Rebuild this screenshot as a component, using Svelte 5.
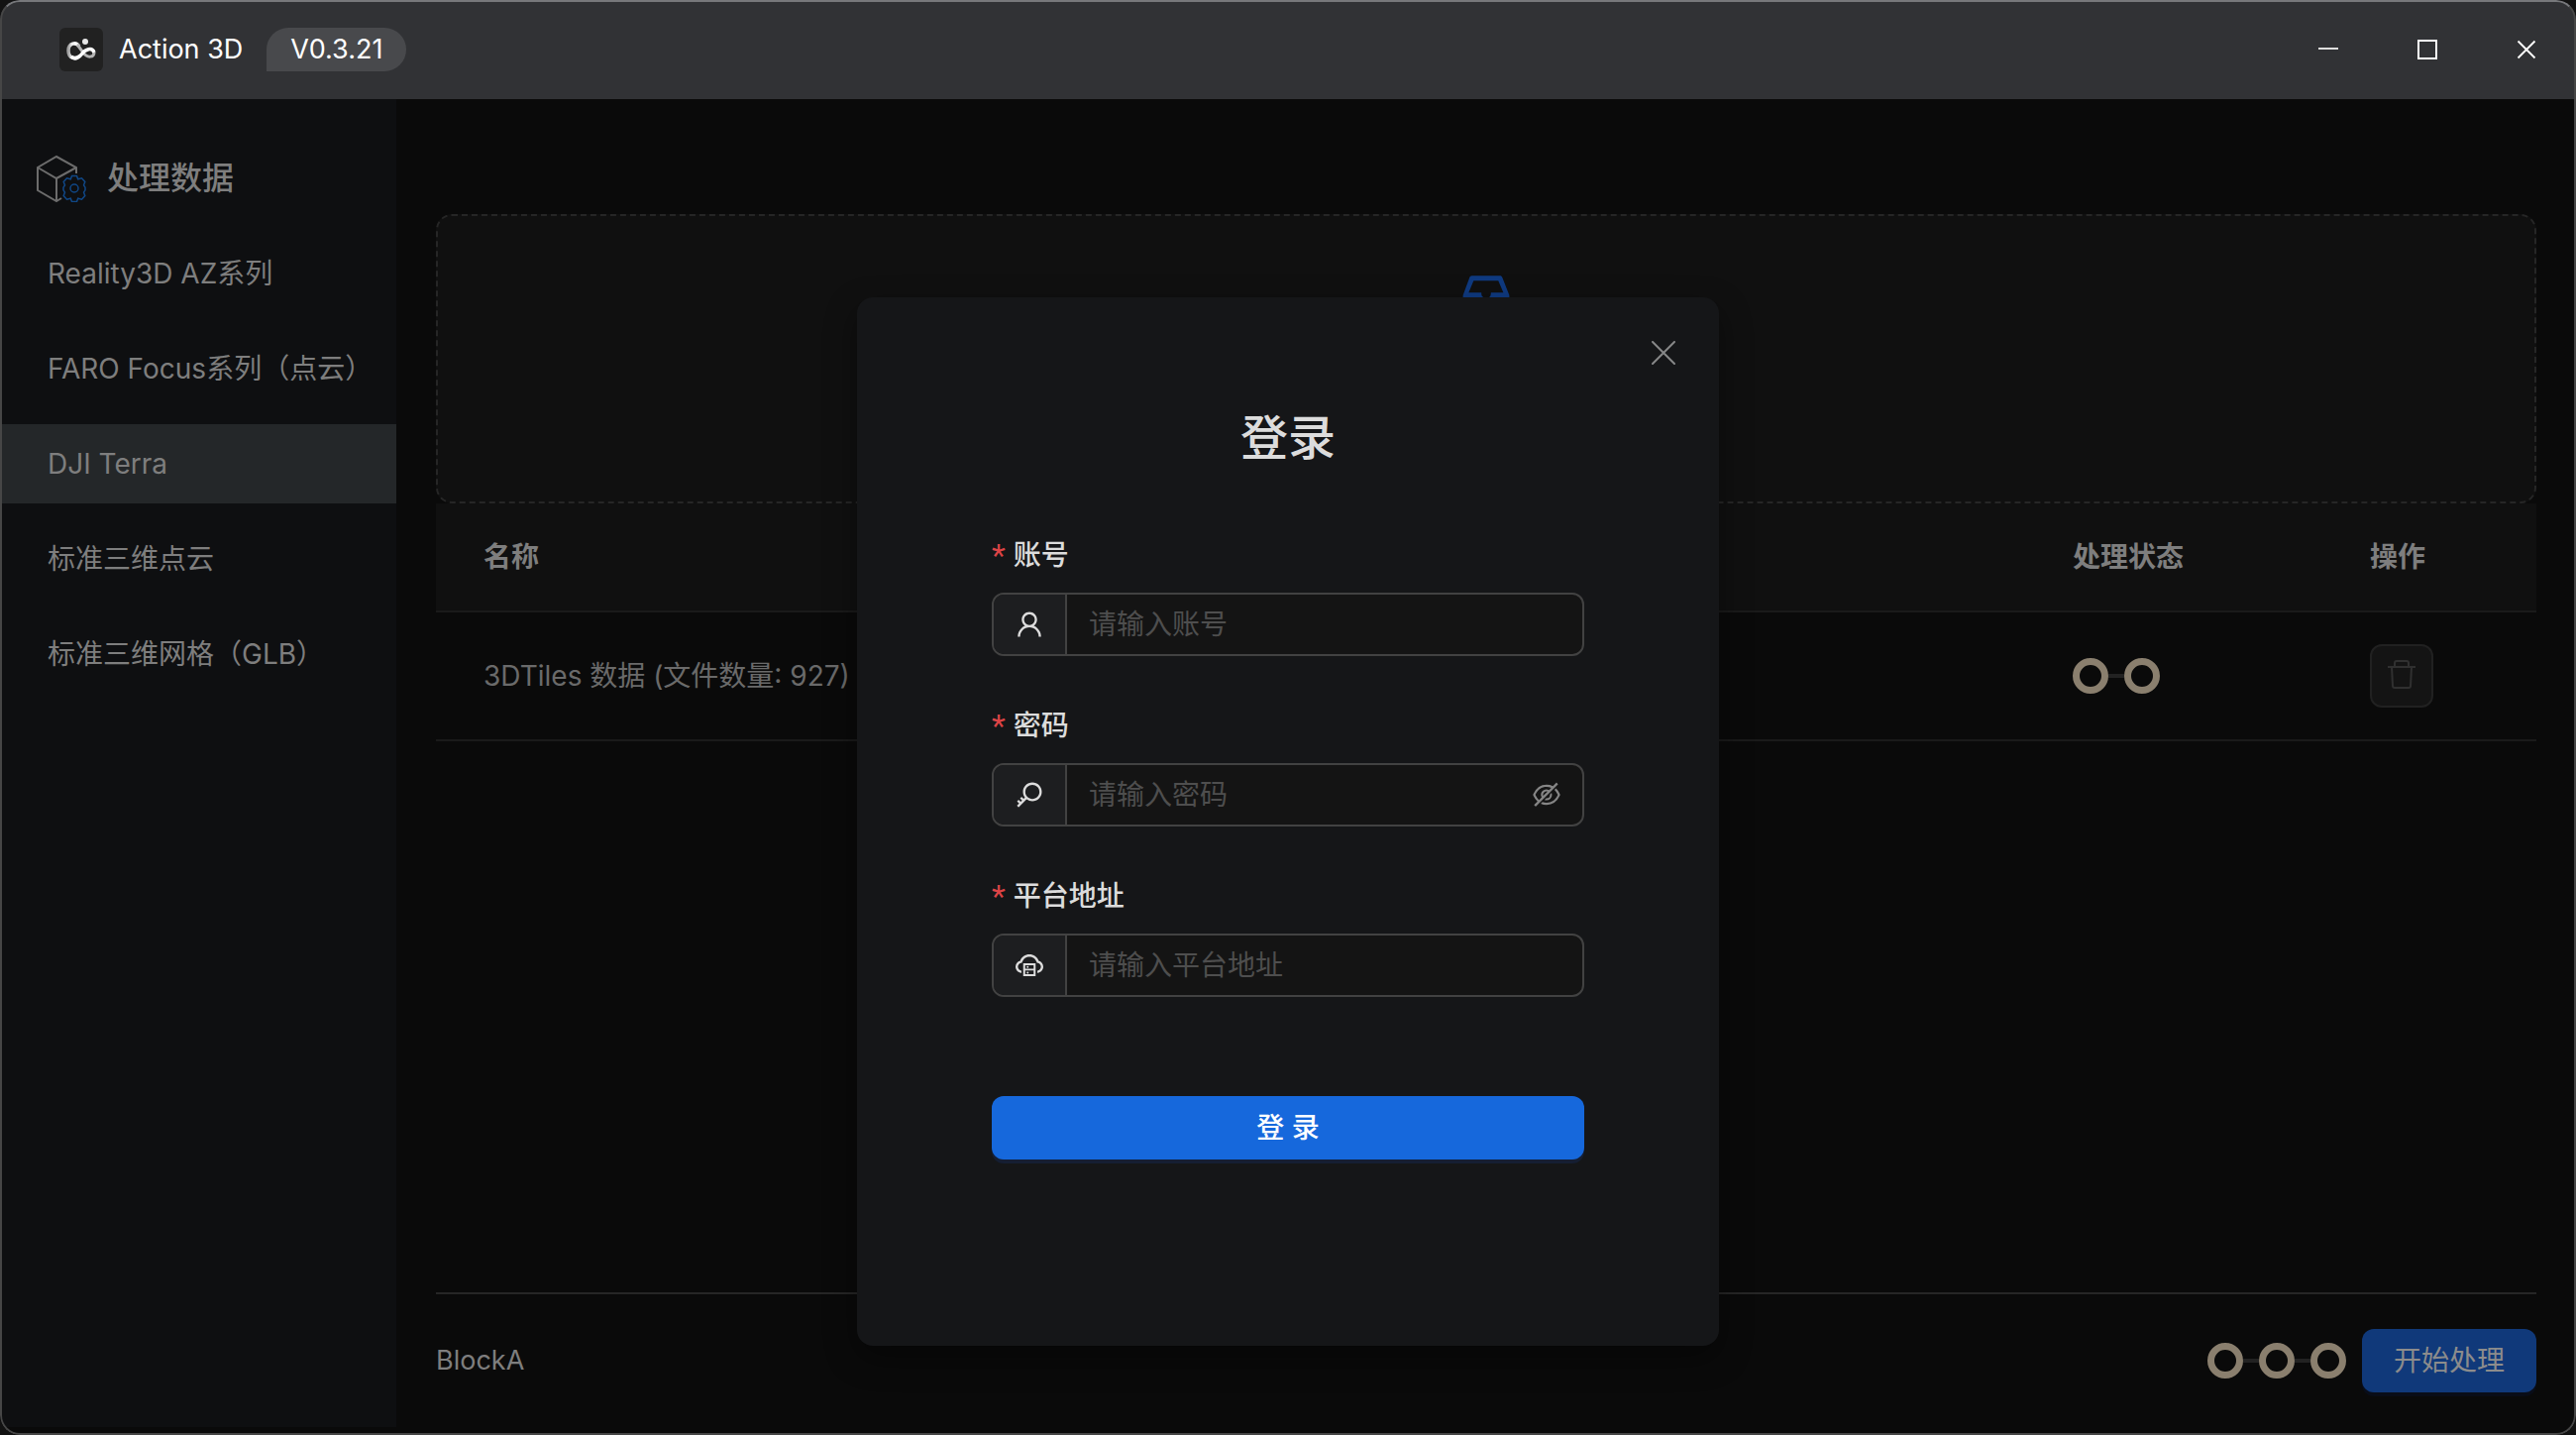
<script lang="ts">
    let account = $state("");
    let password = $state("");
    let address = $state("");
    let showPassword = $state(false);
    let active = $state("DJI Terra");

    const menu = [
        "Reality3D AZ系列",
        "FARO Focus系列（点云）",
        "DJI Terra",
        "标准三维点云",
        "标准三维网格（GLB）",
    ];

    const icons = {
        user: "M858.5 763.6a374 374 0 00-80.6-119.5 375.63 375.63 0 00-119.5-80.6c-.4-.2-.8-.3-1.2-.5C719.5 518 760 444.7 760 362c0-137-111-248-248-248S264 225 264 362c0 82.7 40.5 156 102.8 201.1-.4.2-.8.3-1.2.5-44.8 18.9-85 46-119.5 80.6a375.63 375.63 0 00-80.6 119.5A371.7 371.7 0 00136 901.8a8 8 0 008 8.2h60c4.4 0 7.9-3.5 8-7.8 2-77.2 33-149.5 87.8-204.3 56.7-56.7 132-87.9 212.2-87.9s155.5 31.2 212.2 87.9C779 752.7 810 825 812 902.2c.1 4.4 3.6 7.8 8 7.8h60a8 8 0 008-8.2c-1-47.8-10.9-94.3-29.5-138.2zM512 534c-45.9 0-89.1-17.9-121.6-50.4S340 407.9 340 362c0-45.9 17.9-89.1 50.4-121.6S466.1 190 512 190s89.1 17.9 121.6 50.4S684 316.1 684 362c0 45.9-17.9 89.1-50.4 121.6S557.9 534 512 534z",
        key: "M608 112c-167.9 0-304 136.1-304 304 0 70.3 23.9 135 63.9 186.5l-41.1 41.1-62.3-62.3a8.15 8.15 0 00-11.4 0l-39.8 39.8a8.15 8.15 0 000 11.4l62.3 62.3-44.9 44.9-62.3-62.3a8.15 8.15 0 00-11.4 0l-39.8 39.8a8.15 8.15 0 000 11.4l62.3 62.3-65.3 65.3a8.03 8.03 0 000 11.3l42.3 42.3c3.1 3.1 8.2 3.1 11.3 0l253.6-253.6A304.06 304.06 0 00608 720c167.9 0 304-136.1 304-304S775.9 112 608 112zm161.2 465.2C726.2 620.3 668.9 644 608 644c-60.9 0-118.2-23.7-161.2-66.8-43.1-43-66.8-100.3-66.8-161.2 0-60.9 23.7-118.2 66.8-161.2 43-43.1 100.3-66.8 161.2-66.8 60.9 0 118.2 23.7 161.2 66.8 43.1 43 66.8 100.3 66.8 161.2 0 60.9-23.7 118.2-66.8 161.2z",
        server: "M704 446H320c-4.4 0-8 3.6-8 8v402c0 4.4 3.6 8 8 8h384c4.4 0 8-3.6 8-8V454c0-4.4-3.6-8-8-8zm-328 64h272v117H376V510zm272 290H376V683h272v117zM424 748a32 32 0 1064 0 32 32 0 10-64 0zm0-178a32 32 0 1064 0 32 32 0 10-64 0zM811.4 368.9C765.6 248 648.9 162 512.2 162S258.8 247.9 213 368.8C126.9 391.5 63.5 470.2 64 563.6 64.6 668 145.6 752.9 247.6 762c4.7.4 8.7-3.3 8.7-8v-60.4c0-4-3-7.4-7-7.9-27-3.4-52.5-15.2-72.1-34.5-24-23.5-37.2-55.1-37.2-88.6 0-28 9.1-54.4 26.2-76.4 16.7-21.4 40.2-36.9 66.1-43.7l37.9-10 13.9-36.7c8.6-22.8 20.6-44.2 35.7-63.5 14.9-19.2 32.6-36 52.4-50 41.1-28.9 89.5-44.2 140-44.2s98.9 15.3 140 44.3c19.9 14 37.5 30.8 52.4 50 15.1 19.3 27.1 40.7 35.7 63.5l13.8 36.6 37.8 10c54.2 14.4 92.1 63.7 92.1 120 0 33.6-13.2 65.1-37.2 88.6-19.5 19.2-44.9 31.1-71.9 34.5-4 .5-6.9 3.9-6.9 7.9V754c0 4.7 4.1 8.4 8.8 8 101.7-9.2 182.5-94 183.2-198.2.6-93.4-62.7-172.1-148.6-194.9z",
        eyeOff: "M942.2 486.2Q889.47 375.11 816.7 305l-50.88 50.88C807.31 395.53 843.45 447.4 874.7 512 791.5 684.2 673.4 766 512 766q-72.67 0-133.87-22.38L323 798.75Q408 838 512 838q288.3 0 430.2-300.3a60.29 60.29 0 000-51.5zm-63.57-320.64L836 122.88a8 8 0 00-11.32 0L715.31 232.2Q624.86 186 512 186q-288.3 0-430.2 300.3a60.3 60.3 0 000 51.5q56.69 119.4 136.5 191.41L112.48 835a8 8 0 000 11.31L155.17 889a8 8 0 0011.31 0l712.15-712.12a8 8 0 000-11.32zM149.3 512C232.6 339.8 350.7 258 512 258c54.54 0 104.13 9.36 149.12 28.39l-70.3 70.3a176 176 0 00-238.13 238.13l-83.42 83.42C223.1 637.49 183.3 582.28 149.3 512zm246.7 0a112.11 112.11 0 01146.2-106.69L401.31 546.2A112 112 0 01396 512zM508 624c-3.46 0-6.87-.16-10.25-.47l-52.82 52.82a176.09 176.09 0 00227.42-227.42l-52.82 52.82c.31 3.38.47 6.79.47 10.25a111.94 111.94 0 01-112 112z",
        inbox: "M885.2 446.3l-.2-.8-112.2-285.1c-5-16.1-19.9-27.2-36.8-27.2H281.2c-17 0-32.1 11.3-36.9 27.6L139.4 443l-.3.7-.2.8c-1.3 4.9-1.7 9.9-1 14.8-.1 1.6-.2 3.2-.2 4.8V830a60.9 60.9 0 0060.8 60.8h627.2c33.5 0 60.8-27.3 60.9-60.8V464.1c0-1.3 0-2.6-.1-3.7.4-4.9 0-9.6-1.3-14.1zm-295.8-43l-.3 15.7c-.8 44.9-31.8 75.1-77.1 75.1-22.1 0-41.1-7.1-54.8-20.6S436 441.2 435.6 419l-.3-15.7H229.5L309 210h399.2l81.7 193.3H589.4zm-375 76.8h157.3c24.3 57.1 76 90.8 140.4 90.8 33.7 0 65-9.4 90.3-27.2 22.2-15.6 39.5-37.4 50.7-63.6h156.5V814H214.4V480.1z",
    };

    const handleSubmit = (e: SubmitEvent) => {
        e.preventDefault()
    }
</script>

{#snippet icon(path: string, size: number)}
    <svg viewBox="0 0 1024 1024" width={size} height={size} fill="currentColor" aria-hidden="true">
        <path d={path}></path>
    </svg>
{/snippet}

{#snippet steps(count: number)}
    <div class="steps">
        {#each Array(count) as _}
            <span class="step"></span>
        {/each}
    </div>
{/snippet}

<div class="window">
    <header class="titlebar">
        <svg class="logo" viewBox="0 0 44 44" width="44" height="44" aria-hidden="true">
            <defs>
                <linearGradient id="ribbon" x1="0" y1="0" x2="1" y2="0">
                    <stop offset="0" stop-color="#a0a0a0" />
                    <stop offset="0.3" stop-color="#f0f0f0" />
                    <stop offset="0.7" stop-color="#ffffff" />
                    <stop offset="1" stop-color="#a8a8a8" />
                </linearGradient>
            </defs>
            <rect width="44" height="44" rx="6" fill="#212121" />
            <path d="M20 19C17 14 9 15 9 23c0 9 8 9 12 5" fill="none" stroke="url(#ribbon)" stroke-width="3.500" />
            <path d="M18 17l6 8c4 6 11 5 11 0" fill="none" stroke="#b4b4b4" stroke-width="3" />
            <path d="M12 29c4 4 8 1 11-3s10-7 12-1" fill="none" stroke="#fff" stroke-width="3.500" />
            <circle cx="26" cy="14" r="3" fill="#e8e8e8" />
        </svg>
        <h1>Action 3D</h1>
        <span class="version">V0.3.21</span>
        <div class="controls">
            <button type="button" aria-label="最小化">
                <svg viewBox="0 0 20 20" width="20" height="20"><path d="M0 9h20" stroke="#dedede" stroke-width="2" /></svg>
            </button>
            <button type="button" aria-label="最大化">
                <svg viewBox="0 0 20 20" width="20" height="20"><path d="M1 1h18v18H1z" fill="none" stroke="#fff" stroke-width="2" /></svg>
            </button>
            <button type="button" aria-label="关闭窗口">
                <svg viewBox="0 0 20 20" width="20" height="20"><path d="M1.500 1.500l17 17M18.500 1.500l-17 17" stroke="#fff" stroke-width="1.800" /></svg>
            </button>
        </div>
    </header>

    <div class="body">
        <nav class="sidebar">
            <h2>
                <svg viewBox="0 0 52 48" width="52" height="48" fill="none" aria-hidden="true">
                    <path d="M41 19v-6L21 2 2 13v23l19 11 5-3M2 13l19 11 20-11M21 24v23" stroke="#6c6c6c" stroke-width="2" />
                    <g stroke="#104786" stroke-width="1.500">
                        <path d="M36.500 21.500h5l1.200 3.300 3.800-1 3.300 3.700-1.300 3.500 1.500 2.200v2.600l-1.500 2.200 1.300 3.500-3.300 3.700-3.800-1-1.200 3.300h-5l-1.200-3.300-3.800 1-3.300-3.700 1.300-3.500-1.500-2.200v-2.600l1.500-2.200-1.300-3.500 3.300-3.700 3.800 1z" />
                        <circle cx="39" cy="34" r="4" />
                    </g>
                </svg>
                处理数据
            </h2>
            {#each menu as item}
                <button type="button" class:active={item === active} onclick={() => (active = item)}>{item}</button>
            {/each}
        </nav>

        <main>
            <button type="button" class="upload" aria-label="上传文件">
                {@render icon(icons.inbox, 64)}
            </button>
            <table>
                <thead>
                    <tr>
                        <th>名称</th>
                        <th class="status">处理状态</th>
                        <th class="action">操作</th>
                    </tr>
                </thead>
                <tbody>
                    <tr>
                        <td>3DTiles 数据 (文件数量: 927)</td>
                        <td>{@render steps(2)}</td>
                        <td>
                            <button type="button" class="delete" aria-label="删除">
                                <svg viewBox="0 0 28 32" width="28" height="32" fill="none" stroke="currentColor" stroke-width="2">
                                    <path d="M0 7h28M7 7V3q0-2 2-2h10q2 0 2 2v4M4 7l1 19q0 2 2 2h14q2 0 2-2l1-19" />
                                </svg>
                            </button>
                        </td>
                    </tr>
                </tbody>
            </table>
            <footer>
                <span class="block-name">BlockA</span>
                {@render steps(3)}
                <button type="button" class="start">开始处理</button>
            </footer>
        </main>
    </div>

    <div class="overlay">
        <div class="modal" role="dialog" aria-modal="true" aria-labelledby="login-title">
            <button type="button" class="close" aria-label="关闭">
                <svg viewBox="0 0 24 24" width="24" height="24"><path d="M1 1l22 22M23 1L1 23" stroke="currentColor" stroke-width="2" stroke-linecap="round" /></svg>
            </button>
            <h2 id="login-title">登录</h2>
            <form onsubmit={handleSubmit}>
                <label for="account"><span>*</span>账号</label>
                <div class="field">
                    <span class="addon">{@render icon(icons.user, 32)}</span>
                    <input id="account" type="text" placeholder="请输入账号" bind:value={account} />
                </div>
                <label for="password"><span>*</span>密码</label>
                <div class="field">
                    <span class="addon">{@render icon(icons.key, 32)}</span>
                    <input id="password" type={showPassword ? "text" : "password"} placeholder="请输入密码" bind:value={password} />
                    <button type="button" class="eye" aria-label="显示密码" onclick={() => (showPassword = !showPassword)}>
                        {@render icon(icons.eyeOff, 32)}
                    </button>
                </div>
                <label for="address"><span>*</span>平台地址</label>
                <div class="field">
                    <span class="addon">{@render icon(icons.server, 32)}</span>
                    <input id="address" type="text" placeholder="请输入平台地址" bind:value={address} />
                </div>
                <button type="submit" class="submit">登 录</button>
            </form>
        </div>
    </div>
</div>

<style>
    :global(body) {
        margin: 0;
        background: #121212;
    }

    .window {
        position: relative;
        box-sizing: border-box;
        min-height: 100vh;
        display: flex;
        flex-direction: column;
        overflow: hidden;
        border-radius: 20px;
        background: #0a0a0a;
        color: #7e7e7e;
        font-family: Inter, "Noto Sans CJK SC", sans-serif;
        font-size: 28px;
        line-height: 44px;
    }

    /* hairline frame over everything, brighter along the top edge */
    .window::after {
        content: "";
        position: absolute;
        inset: 0;
        border: 2px solid #464646;
        border-top-color: #77787b;
        border-radius: 20px;
        pointer-events: none;
        z-index: 3;
    }

    h1,
    h2 {
        margin: 0;
        font-weight: 400;
    }

    button {
        padding: 0;
        border: none;
        background: none;
        color: inherit;
        font: inherit;
        cursor: pointer;
    }

    svg {
        display: block;
        flex-shrink: 0;
    }

    .titlebar {
        position: relative;
        z-index: 2;
        box-sizing: border-box;
        height: 100px;
        display: flex;
        align-items: center;
        padding-left: 60px;
        background: #313235;
        color: #fff;
        font-size: 27px;
    }

    h1 {
        margin: 0 24px 0 16px;
        font-size: 27px;
    }

    .version {
        padding: 0 24px;
        border-radius: 22px 22px 22px 0;
        background: #48494c;
    }

    .controls {
        margin-left: auto;
        display: flex;
    }

    .controls button {
        width: 100px;
        height: 100px;
        display: flex;
        align-items: center;
        justify-content: center;
    }

    .body {
        flex: 1;
        display: flex;
        padding-bottom: 8px;
    }

    .sidebar {
        flex: 0 0 400px;
        display: flex;
        flex-direction: column;
        gap: 16px;
        padding-top: 40px;
        background: #0e0f11;
    }

    .sidebar h2 {
        height: 80px;
        display: flex;
        align-items: center;
        gap: 20px;
        padding-left: 36px;
        font-size: 32px;
        font-weight: 500;
    }

    .sidebar button {
        height: 80px;
        padding-left: 48px;
        text-align: left;
        white-space: nowrap;
    }

    .sidebar button.active {
        background: #242729;
    }

    main {
        flex: 1;
        display: flex;
        flex-direction: column;
        padding: 116px 40px 0;
    }

    .upload {
        box-sizing: border-box;
        height: 292px;
        display: flex;
        justify-content: center;
        padding-top: 52px;
        border: 2px dashed #262626;
        border-radius: 16px;
        background: #101010;
        color: #0f3a80;
    }

    table {
        width: 100%;
        table-layout: fixed;
        border-collapse: separate;
        border-spacing: 0;
    }

    th,
    td {
        box-sizing: border-box;
        padding: 0 0 0 48px;
        border-bottom: 2px solid #1a1a1a;
        text-align: left;
    }

    th {
        height: 110px;
        background: #101010;
        font-weight: 700;
    }

    td {
        height: 130px;
        color: #6a6a6a;
    }

    .status {
        width: 300px;
    }

    .action {
        width: 216px;
    }

    .steps {
        display: flex;
    }

    .step {
        box-sizing: border-box;
        width: 36px;
        height: 36px;
        border: 7px solid #8a7f6e;
        border-radius: 50%;
    }

    .step + .step {
        position: relative;
        margin-left: 16px;
    }

    .step + .step::before {
        content: "";
        position: absolute;
        top: 9px;
        left: -23px;
        width: 16px;
        height: 4px;
        background: #222;
    }

    .delete {
        box-sizing: border-box;
        width: 64px;
        height: 64px;
        display: flex;
        align-items: center;
        justify-content: center;
        border: 2px solid #212121;
        border-radius: 12px;
        background: #141414;
        color: #303030;
    }

    footer {
        margin-top: auto;
        height: 136px;
        box-sizing: border-box;
        display: flex;
        align-items: center;
        gap: 16px;
        border-top: 2px solid #262626;
    }

    .block-name {
        margin-right: auto;
        font-size: 27px;
    }

    .start {
        height: 64px;
        padding: 0 32px;
        border-radius: 12px;
        background: #10397a;
        box-shadow: 0 4px 0 #090d18;
        color: #8c8c8c;
    }

    .overlay {
        position: absolute;
        inset: 0;
        z-index: 1;
        display: flex;
        align-items: flex-start;
        justify-content: center;
        padding-top: 300px;
    }

    .modal {
        position: relative;
        box-sizing: border-box;
        width: 870px;
        padding: 102px 136px 188px;
        border-radius: 16px;
        background: #151618;
        box-shadow: 0 12px 32px #0006;
        color: #dcdcdc;
    }

    .close {
        position: absolute;
        top: 32px;
        right: 32px;
        width: 48px;
        height: 48px;
        display: flex;
        align-items: center;
        justify-content: center;
        color: #868788;
    }

    .modal h2 {
        margin-bottom: 56px;
        font-size: 48px;
        line-height: 80px;
        font-weight: 500;
        text-align: center;
    }

    form {
        display: flex;
        flex-direction: column;
    }

    label {
        margin-bottom: 16px;
        display: flex;
        gap: 8px;
        font-weight: 500;
    }

    label span {
        color: #dc4446;
        font-family: Roboto, sans-serif;
        font-size: 32px;
        font-weight: 400;
    }

    .field {
        box-sizing: border-box;
        height: 64px;
        margin-bottom: 48px;
        display: flex;
        overflow: hidden;
        border: 2px solid #424242;
        border-radius: 12px;
        background: #141414;
    }

    .field:focus-within {
        border-color: #1668dc;
    }

    .addon {
        width: 72px;
        display: flex;
        align-items: center;
        justify-content: center;
        border-right: 2px solid #424242;
        background: #1d1e20;
    }

    input {
        flex: 1;
        min-width: 0;
        padding: 0 22px;
        border: none;
        outline: none;
        background: transparent;
        color: #dcdcdc;
        font: inherit;
    }

    input::placeholder {
        color: #4e4e4e;
        opacity: 1;
    }

    .eye {
        padding: 0 20px;
        color: #858585;
    }

    .submit {
        height: 64px;
        margin-top: 52px;
        border-radius: 12px;
        background: #1668dc;
        box-shadow: 0 4px 0 #151e33;
        color: #fff;
        font-weight: 500;
    }
</style>
